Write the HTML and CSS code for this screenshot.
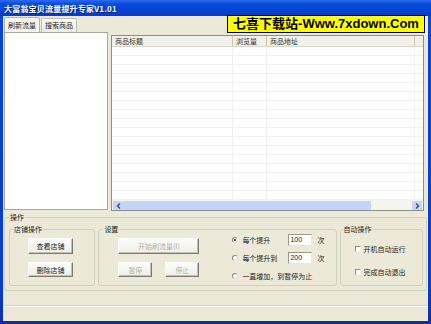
FILE: index.html
```html
<!DOCTYPE html>
<html lang="zh">
<head>
    <meta charset="UTF-8">
    <meta name="viewport" content="width=device-width, initial-scale=1.0">
    <title>大富翁宝贝流量提升专家V1.01</title>
    <link rel="stylesheet" href="styles.css">
</head>
<body>
    <div class="window">
        <div class="titlebar">
            <span class="title-text">大富翁宝贝流量提升专家V1.01</span>
        </div>
        <div class="client">
            <div class="tabs">
                <span class="tab active">刷新流量</span>
                <span class="tab">搜索商品</span>
            </div>
            <div class="tab-page">
                <div class="listbox"></div>
                <div class="listview">
                    <div class="lv-head">
                        <span class="col col-title">商品标题</span>
                        <span class="col col-views">浏览量</span>
                        <span class="col col-url">商品地址</span>
                        <span class="col col-fill"></span>
                    </div>
                    <div class="lv-body">
                        <span class="lv-col col-title"></span>
                        <span class="lv-col col-views"></span>
                        <span class="lv-col col-url"></span>
                    </div>
                    <div class="hscroll">
                        <span class="sb-btn">
                            <svg width="5" height="6" viewBox="0 0 5 6"><polyline points="4,0.5 1.5,3 4,5.5" fill="none" stroke="#3b4f86" stroke-width="1.4"/></svg>
                        </span>
                        <span class="sb-thumb"></span>
                        <span class="sb-track"></span>
                        <span class="sb-btn">
                            <svg width="5" height="6" viewBox="0 0 5 6"><polyline points="1,0.5 3.5,3 1,5.5" fill="none" stroke="#3b4f86" stroke-width="1.4"/></svg>
                        </span>
                    </div>
                </div>
            </div>

            <fieldset class="group group-main">
                <legend>操作</legend>
                <div class="group-row">
                    <fieldset class="group group-shop">
                        <legend>店铺操作</legend>
                        <button class="btn btn-shop">查看店铺</button>
                        <button class="btn btn-shop second">删除店铺</button>
                    </fieldset>

                    <fieldset class="group group-settings">
                        <legend>设置</legend>
                        <div class="settings">
                            <div class="settings-buttons">
                                <button class="btn btn-start" disabled>开始刷流量(I)</button>
                                <div class="btn-pair">
                                    <button class="btn btn-small" disabled>暂停</button>
                                    <button class="btn btn-small" disabled>停止</button>
                                </div>
                            </div>
                            <div class="options">
                                <div class="opt">
                                    <span class="radio checked"></span>
                                    <span class="opt-label">每个提升</span>
                                    <span class="textbox">100</span>
                                    <span class="unit">次</span>
                                </div>
                                <div class="opt">
                                    <span class="radio"></span>
                                    <span class="opt-label">每个提升到</span>
                                    <span class="textbox">200</span>
                                    <span class="unit">次</span>
                                </div>
                                <div class="opt">
                                    <span class="radio"></span>
                                    <span class="opt-label">一直增加，到暂停为止</span>
                                </div>
                            </div>
                        </div>
                    </fieldset>

                    <fieldset class="group group-auto">
                        <legend>自动操作</legend>
                        <div class="check first"><span class="checkbox"></span>开机自动运行</div>
                        <div class="check"><span class="checkbox"></span>完成自动退出</div>
                    </fieldset>
                </div>
            </fieldset>

            <div class="statusbar"></div>
        </div>
    </div>

    <div class="watermark">七喜下载站-Www.7xdown.Com</div>
</body>
</html>
```

FILE: styles.css
```css
* {
    box-sizing: border-box;
}
body {
    margin: 0;
    width: 431px;
    height: 324px;
    overflow: hidden;
    position: relative;
    background: #0b3fd2;
    font-family: 'Noto Sans CJK SC', 'Liberation Sans', sans-serif;
    font-size: 7px;
    color: #1c1c1c;
}
.window {
    width: 431px;
    height: 324px;
    display: flex;
    flex-direction: column;
    background: linear-gradient(180deg, #0b44d8 0%, #0a3ccb 90%, #0a2fa6 100%);
}
.titlebar {
    height: 16px;
    padding: 2px 0 0 4px;
    display: flex;
    align-items: center;
    background: linear-gradient(180deg, #2c6cf2 0%, #0a4ad9 25%, #0743d0 70%, #0a3bbe 100%);
}
.title-text {
    color: #fff;
    font-size: 8px;
    font-weight: 700;
    letter-spacing: 0.2px;
    line-height: 10px;
    text-shadow: 1px 1px 0 #0a1f7a;
}
.client {
    flex: 1;
    margin: 0 3px 3px 3px;
    background: #ece9d8;
    display: flex;
    flex-direction: column;
}

/* tabs */
.tabs {
    height: 16px;
    padding: 1px 0 0 1px;
    display: flex;
    align-items: flex-end;
}
.tab {
    height: 14px;
    padding: 0 3px;
    line-height: 13px;
    border: 1px solid #c2c0b2;
    border-bottom: none;
    border-radius: 2px 2px 0 0;
    background: linear-gradient(180deg, #fafaf7 0%, #ecebe4 100%);
    margin-right: 1px;
}
.tab.active {
    height: 15px;
    background: #f5f4ee;
    line-height: 14px;
    border-color: #b4b2a4;
}
.tab-page {
    height: 181px;
    display: flex;
    padding-left: 1px;
}
.listbox {
    width: 104px;
    height: 178px;
    background: #fff;
    border: 1px solid #a9a79a;
}
.listview {
    width: 313px;
    height: 176px;
    margin: 3px 0 0 3px;
    background: #fff;
    border: 1px solid #8f8e86;
    display: flex;
    flex-direction: column;
}
.lv-head {
    height: 11px;
    display: flex;
    background: #f1f0ea;
    border-bottom: 1px solid #d8d5c6;
}
.col {
    line-height: 10px;
    padding-left: 3px;
    color: #333;
    border-right: 1px solid #c9c6b6;
}
.col-title { width: 121px; }
.col-views { width: 34px; }
.col-url { width: 148px; }
.col-fill { flex: 1; border-right: none; }
.lv-body {
    flex: 1;
    display: flex;
    background: repeating-linear-gradient(180deg, #fff 0, #fff 8px, #f1f1ef 8px, #f1f1ef 9px);
}
.lv-col {
    border-right: 1px solid #f0f0ec;
}
.hscroll {
    height: 10px;
    display: flex;
    padding: 0 1px;
    background: #f4f3ee;
}
.sb-btn {
    width: 10px;
    height: 9px;
    margin-top: 1px;
    display: flex;
    align-items: center;
    justify-content: center;
    background: #c6d6f8;
    border-radius: 1px;
}
.sb-thumb {
    width: 248px;
    margin-top: 1px;
    background: #c3d3f9;
    border-radius: 1px;
}
.sb-track {
    flex: 1;
}

/* group boxes */
.group {
    margin: 0;
    padding: 0;
    min-width: 0;
    border: 1px solid #d0d0bf;
    border-radius: 3px;
}
.group legend {
    padding: 0 1px;
    margin-left: 2px;
    line-height: 8px;
    color: #1c1c1c;
}
.group-main {
    height: 78px;
    margin: 0 1px 0 1px;
    padding: 4px 3px 4px 4px;
}
.group-main > legend {
    margin-left: 0;
}
.group-row {
    display: flex;
    gap: 3px;
}
.group-shop {
    width: 87px;
    height: 61px;
    padding-top: 5px;
}
.group-shop legend { margin-left: 3px; }
.group-settings {
    width: 240px;
    height: 61px;
}
.group-settings legend { margin-left: 4px; }
.group-auto {
    width: 84px;
    height: 61px;
}
.group-auto legend { margin-left: 2px; }

.btn {
    display: block;
    font-family: inherit;
    font-size: 7px;
    color: #1c1c1c;
    padding: 0;
    background: linear-gradient(180deg, #fbfbf8 0%, #f0efe8 100%);
    border: 1px solid;
    border-color: #fff #7d7b70 #7d7b70 #fff;
    box-shadow: inset -1px -1px 0 #c3c1b4;
}
.btn:disabled {
    color: #b3b0a2;
}
.btn-shop {
    width: 45px;
    height: 16px;
    margin-left: 18px;
}
.btn-shop.second {
    height: 15px;
    margin-top: 8px;
}
.settings {
    display: flex;
}
.settings-buttons {
    width: 81px;
    margin: 5px 0 0 19px;
}
.btn-start {
    width: 81px;
    height: 16px;
}
.btn-pair {
    display: flex;
    justify-content: space-between;
    margin-top: 8px;
}
.btn-small {
    width: 34px;
    height: 15px;
}
.options {
    margin-left: 33px;
    display: flex;
    flex-direction: column;
    gap: 5px;
}
.opt {
    height: 13px;
    display: flex;
    align-items: center;
    white-space: nowrap;
}
.radio {
    width: 6px;
    height: 6px;
    margin-right: 4px;
    border-radius: 50%;
    background: #fff;
    border: 1px solid;
    border-color: #8b897c #e4e2d6 #e4e2d6 #8b897c;
    position: relative;
}
.radio.checked::after {
    content: '';
    position: absolute;
    left: 1px;
    top: 1px;
    width: 2px;
    height: 2px;
    border-radius: 50%;
    background: #222;
}
.opt-label {
    width: 46px;
}
.textbox {
    width: 24px;
    height: 12px;
    padding-left: 1px;
    line-height: 10px;
    font-family: 'Liberation Sans', sans-serif;
    font-size: 7px;
    background: #fff;
    border: 1px solid;
    border-color: #9c9a8e #e8e6da #e8e6da #9c9a8e;
}
.unit {
    margin-left: 5px;
}
.check {
    height: 9px;
    margin-left: 14px;
    display: flex;
    align-items: center;
    white-space: nowrap;
}
.check.first {
    margin-top: 11px;
    margin-bottom: 14px;
}
.checkbox {
    width: 6px;
    height: 6px;
    margin-right: 3px;
    background: #fff;
    border: 1px solid;
    border-color: #8b897c #f4f3ee #f4f3ee #8b897c;
}
.statusbar {
    margin-top: 14px;
    flex: 1;
    border-top: 1px solid #d7d4c3;
    box-shadow: inset 0 1px 0 #fff;
}

/* yellow banner laid over the window */
.watermark {
    position: absolute;
    left: 227px;
    top: 15px;
    width: 198px;
    height: 18px;
    background: #ffff00;
    border: 1px solid #000;
    color: #000;
    font-family: 'Liberation Sans', 'Noto Sans CJK SC', sans-serif;
    font-size: 13px;
    font-weight: 700;
    line-height: 16px;
    text-align: center;
    white-space: nowrap;
}
```
